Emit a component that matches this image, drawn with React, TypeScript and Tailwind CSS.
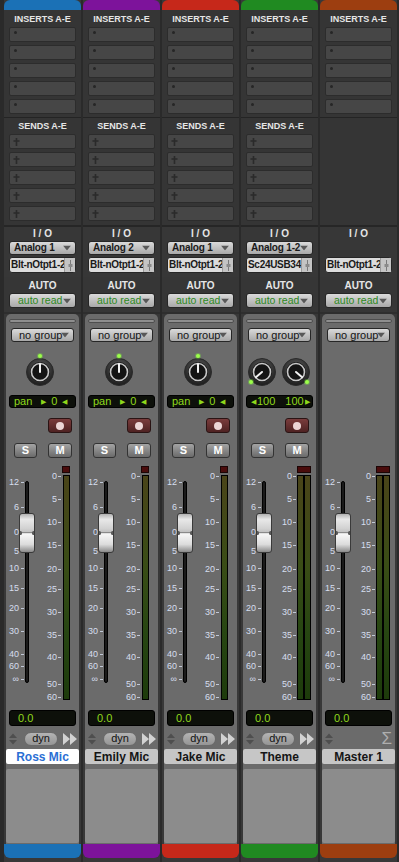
import clsx from "clsx";

type StripData = {
  name: string;
  color: string;
  input?: string;
  output: string;
  kind: "mono" | "stereo" | "master";
  selected?: boolean;
};

const strips: StripData[] = [
  { name: "Ross Mic", color: "bg-[#1b71b6]", input: "Analog 1", output: "Blt-nOtpt1-2", kind: "mono", selected: true },
  { name: "Emily Mic", color: "bg-[#7d139b]", input: "Analog 2", output: "Blt-nOtpt1-2", kind: "mono" },
  { name: "Jake Mic", color: "bg-[#c6281a]", input: "Analog 1", output: "Blt-nOtpt1-2", kind: "mono" },
  { name: "Theme", color: "bg-[#208a21]", input: "Analog 1-2", output: "Sc24USB34", kind: "stereo" },
  { name: "Master 1", color: "bg-[#9d3e10]", output: "Blt-nOtpt1-2", kind: "master" }
];

// y = centre of the label, from top of the fader block
const faderMarks: [string, number][] = [
  ["12", 24], ["6", 49], ["0", 74], ["5", 93], ["10", 110], ["15", 130],
  ["20", 150], ["30", 173], ["40", 196], ["60", 208], ["∞", 221]
];
const meterMarks: [string, number][] = [
  ["0", 18], ["5", 41], ["10", 64], ["15", 87], ["20", 111], ["25", 131],
  ["30", 154], ["35", 177], ["40", 199], ["50", 226], ["60", 239]
];

function DownTri() {
  return (
    <svg width="8" height="5" viewBox="0 0 8 5" className="absolute right-[4px] top-1/2 -translate-y-1/2">
      <path d="M0 0 L8 0 L4 5 Z" fill="#585858" />
    </svg>
  );
}

function Slot({ send }: { send?: boolean }) {
  return (
    <div className="relative h-[15px] rounded-[2px] border border-[#2c2c2c] bg-[#464646]">
      {send ? (
        <svg width="7" height="8" viewBox="0 0 7 8" className="absolute left-[3px] top-[3px]">
          <path d="M3.5 0 V8 M0.5 3 H6.5" stroke="#2a2a2a" strokeWidth="1.6" />
        </svg>
      ) : (
        <div className="absolute left-[4px] top-[3px] h-[3px] w-[3px] rounded-full bg-[#262626]" />
      )}
    </div>
  );
}

function Knob({ angle, led }: { angle: number; led: [number, number] }) {
  const r = (angle * Math.PI) / 180;
  const x2 = 17 + Math.sin(r) * 8;
  const y2 = 30 - Math.cos(r) * 8;
  return (
    <svg width="34" height="48" viewBox="0 0 34 48">
      <defs>
        <radialGradient id="kb" cx="50%" cy="35%" r="65%">
          <stop offset="0%" stopColor="#5e5e5e" />
          <stop offset="100%" stopColor="#1c1c1c" />
        </radialGradient>
      </defs>
      <circle cx="17" cy="30" r="13.5" fill="url(#kb)" stroke="#2a2a2a" />
      <circle cx="17" cy="30" r="10" fill="#141414" />
      <circle cx="17" cy="30" r="8.5" fill="none" stroke="#c8c8c8" strokeWidth="1.6" />
      <line x1="17" y1="30" x2={x2} y2={y2} stroke="#f2f2f2" strokeWidth="2" strokeLinecap="round" />
      <circle cx={led[0]} cy={led[1]} r="3" fill="#7cf03c" opacity="0.35" />
      <circle cx={led[0]} cy={led[1]} r="2" fill="#9cff4a" />
    </svg>
  );
}

function Meter({ stereo }: { stereo: boolean }) {
  const bar = "h-[225px] w-[7px] border border-black bg-[linear-gradient(to_bottom,#4a4419,#3a4d16_40%,#274612_70%,#1d3b0b)]";
  return (
    <div className={clsx("flex flex-col gap-[2px] pt-[8px]", stereo ? "w-[14px]" : "w-[8px]")}>
      <div className="h-[7px] w-full border border-[#1a0505] bg-[#4a0c0c]" />
      <div className={clsx("flex", stereo ? "gap-0" : "justify-center")}>
        <div className={bar} />
        {stereo && <div className={bar} />}
      </div>
    </div>
  );
}

function FaderBlock({ stereo }: { stereo: boolean }) {
  return (
    <div className="flex h-[247px]">
      <div className="relative w-[18px]">
        {faderMarks.map(([t, y]) => (
          <div key={t + y} className="absolute right-0 flex items-center gap-[2px]" style={{ top: y - 5 }}>
            <span className="text-[9px] leading-[10px] text-[#d6deee]">{t}</span>
            <span className="h-px w-[3px] bg-[#c0c8d8]" />
          </div>
        ))}
      </div>
      <div className="relative ml-[1px] w-[4px]">
        <div className="mt-[23px] h-[202px] rounded-[2px] border border-black bg-[#1a1a1a]" />
        <div className="absolute left-1/2 top-[55px] h-[40px] w-[16px] -translate-x-1/2 overflow-hidden rounded-[3px] border border-[#3a3a3a] bg-[linear-gradient(to_bottom,#b4b4b4,#e8e8e8_14%,#d2d2d2_38%,#c2c2c2_47%,#f6f6f6_54%,#dcdcdc_80%,#8a8a8a)]">
          <div className="absolute left-0 right-0 top-[18px] h-px bg-[#8a8a8a]" />
          <div className="absolute left-[-1px] top-[17px] h-[4px] w-[3px] rounded-full bg-[#5a5a5a]" />
          <div className="absolute right-[-1px] top-[17px] h-[4px] w-[3px] rounded-full bg-[#5a5a5a]" />
        </div>
      </div>
      <div className="relative flex-1">
        {meterMarks.map(([t, y]) => (
          <div key={t} className="absolute right-[1px] flex items-center gap-[1px]" style={{ top: y - 5 }}>
            <span className="text-[9px] leading-[10px] text-[#d6deee]">{t}</span>
            <span className="h-px w-[3px] bg-[#c0c8d8]" />
          </div>
        ))}
      </div>
      <Meter stereo={stereo} />
      <div className={stereo ? "w-[5px]" : "w-[9px]"} />
    </div>
  );
}

function Strip({ s }: { s: StripData }) {
  const mono = s.kind === "mono";
  const master = s.kind === "master";
  const btn = "relative mx-[5px] flex items-center rounded-[3px] border border-[#262626] bg-[linear-gradient(to_bottom,#dadada,#a8a8a8)]";

  return (
    <div className="flex w-[77px] flex-col bg-[#383838]">
      <div className={clsx("h-[10px] rounded-t-[6px]", s.color)} />

      <div className="h-[107px] bg-[#353535] px-[5px] pt-[3px]">
        <div className="h-[14px] text-center text-[9px] font-bold leading-[12px] text-[#e6e6e6]">INSERTS A-E</div>
        <div className="flex flex-col gap-[3px]">
          {[0, 1, 2, 3, 4].map((i) => (
            <Slot key={i} />
          ))}
        </div>
      </div>
      <div className="h-px bg-[#242424]" />

      <div className="h-[107px] bg-[#353535] px-[5px] pt-[1px]">
        {!master && (
          <>
            <div className="h-[15px] text-center text-[9px] font-bold leading-[15px] text-[#e6e6e6]">SENDS A-E</div>
            <div className="flex flex-col gap-[3px]">
              {[0, 1, 2, 3, 4].map((i) => (
                <Slot key={i} send />
              ))}
            </div>
          </>
        )}
      </div>
      <div className="h-[2px] bg-[#262626]" />

      <div className="h-[50px] bg-[#373737]">
        <div className="h-[14px] text-center text-[10px] font-bold leading-[14px] text-[#e6e6e6]">I / O</div>
        {s.input ? (
          <div className={clsx(btn, "h-[14px] pl-[4px]")}>
            <span className="text-[10px] font-bold leading-none tracking-[-0.2px] text-[#1a1a1a]">{s.input}</span>
            <DownTri />
          </div>
        ) : (
          <div className="h-[14px]" />
        )}
        <div className="relative mx-[5px] mt-[2px] flex h-[16px] items-center rounded-[3px] border border-[#262626] bg-[#dcdcdc] pl-[1px]">
          <span className="text-[10px] font-bold leading-none tracking-[-0.3px] text-[#1a1a1a]">{s.output}</span>
          <div className="absolute right-0 top-0 flex h-full w-[11px] items-center justify-center border-l border-[#9a9a9a] bg-[#c4c4c4]">
            <svg width="5" height="11" viewBox="0 0 5 11">
              <path d="M2.5 0 V11" stroke="#7a7a7a" strokeWidth="1" />
              <rect x="0.5" y="4" width="4" height="3" fill="#8a8a8a" />
            </svg>
          </div>
        </div>
      </div>

      <div className="h-[35px] bg-[#363636] pt-[1px]">
        <div className="h-[15px] text-center text-[10px] font-bold leading-[16px] text-[#e6e6e6]">AUTO</div>
        <div className={clsx(btn, "h-[15px] pl-[8px]")}>
          <span className="text-[10.5px] leading-none text-[#2e8a1e]">auto read</span>
          <DownTri />
        </div>
      </div>
      <div className="h-[2px] bg-[#2e2e2e]" />

      <div className="mx-[2px] flex h-[530px] flex-col rounded-t-[5px] bg-[#6b6b6b] pt-[5px]">
        <div className="mx-[3px] h-[4px] rounded-full border border-[#4e4e4e] bg-[#8e8e8e]" />
        <div className={clsx(btn, "mx-[3px] mt-[5px] h-[14px] pl-[7px]")}>
          <span className="text-[11px] leading-none text-[#141414]">no group</span>
          <DownTri />
        </div>

        <div className="h-[48px]">
          {mono && (
            <div className="ml-[17px]">
              <Knob angle={0} led={[17, 14]} />
            </div>
          )}
          {s.kind === "stereo" && (
            <div className="flex pl-[2px]">
              <Knob angle={-130} led={[6, 40]} />
              <Knob angle={130} led={[28, 40]} />
            </div>
          )}
        </div>

        <div className="mx-[3px] mt-[5px] h-[13px]">
          {!master && (
            <div className="flex h-full items-center rounded-[3px] border border-black bg-[#0d100a] px-[4px] text-[11px] leading-none text-[#8fd81c]">
              {mono ? (
                <>
                  <span>pan</span>
                  <span className="ml-[9px] text-[7px]">▶</span>
                  <span className="ml-[5px]">0</span>
                  <span className="ml-[5px] text-[7px]">◀</span>
                </>
              ) : (
                <>
                  <span className="text-[7px]">◀</span>
                  <span className="ml-[1px]">100</span>
                  <span className="mx-[5px] h-[9px] w-px bg-[#4a5a30]" />
                  <span>100</span>
                  <span className="ml-[1px] text-[7px]">▶</span>
                </>
              )}
            </div>
          )}
        </div>

        <div className="mt-[10px] flex h-[15px] justify-end pr-[7px]">
          {!master && (
            <div className="flex w-[24px] items-center justify-center rounded-[3px] border border-[#2a1414] bg-[linear-gradient(to_bottom,#7a3c3c,#4e2222)]">
              <div className="h-[8px] w-[8px] rounded-full bg-[#ecd6d6]" />
            </div>
          )}
        </div>

        <div className="mt-[10px] flex h-[15px] justify-between pl-[8px] pr-[7px]">
          {!master && (
            <>
              <div className="flex w-[23px] items-center justify-center rounded-[3px] border border-[#333] bg-[linear-gradient(to_bottom,#a4a4a4,#6a6a6a)] text-[11px] font-bold text-white">S</div>
              <div className="flex w-[24px] items-center justify-center rounded-[3px] border border-[#333] bg-[linear-gradient(to_bottom,#a4a4a4,#6a6a6a)] text-[11px] font-bold text-white">M</div>
            </>
          )}
        </div>

        <FaderBlock stereo={!mono} />

        <div className="mx-[3px] mt-[5px] flex h-[16px] items-center rounded-[3px] border border-black bg-[#0d100a] pl-[8px]">
          <span className="text-[11px] leading-none text-[#8fd81c]">0.0</span>
        </div>

        <div className="mt-[5px] flex h-[15px] items-center pl-[2px] pr-[1px]">
          <svg width="10" height="14" viewBox="0 0 10 14">
            <path d="M1 6 L5 1.5 L9 6 Z M1 8 L5 12.5 L9 8 Z" fill="#4e4e4e" />
          </svg>
          {master ? (
            <span className="ml-auto mr-[2px] text-[17px] leading-none text-[#aeaeae]">Σ</span>
          ) : (
            <>
              <div className="ml-[6px] flex h-[14px] w-[34px] items-center justify-center rounded-full border border-[#6a6a6a] bg-[linear-gradient(to_bottom,#b4b4b4,#959595)] text-[11px] leading-none text-[#111]">dyn</div>
              <svg width="15" height="12" viewBox="0 0 15 12" className="ml-auto">
                <path d="M0 0 L7 6 L0 12 Z M7 0 L14 6 L7 12 Z" fill="#d2d2d2" />
              </svg>
            </>
          )}
        </div>

        <div
          className={clsx(
            "mt-[3px] flex h-[15px] items-center justify-center rounded-[2px] text-[12px] font-bold leading-none",
            s.selected ? "bg-white text-[#2b6fd4]" : "bg-[#c6c6c6] text-[#151515]"
          )}
        >
          {s.name}
        </div>

        <div className="mt-[5px] h-[74px] rounded-[2px] bg-[#8c8c8c]" />
      </div>

      <div className={clsx("h-[14px] rounded-b-[6px]", s.color)} />
    </div>
  );
}

export default function App() {
  return (
    <div className="flex h-[862px] w-[399px] gap-[2px] overflow-hidden bg-[#2a2a2a] pl-[4px] [font-family:'Liberation_Sans',Arial,sans-serif]">
      {strips.map((s) => (
        <Strip key={s.name} s={s} />
      ))}
    </div>
  );
}
